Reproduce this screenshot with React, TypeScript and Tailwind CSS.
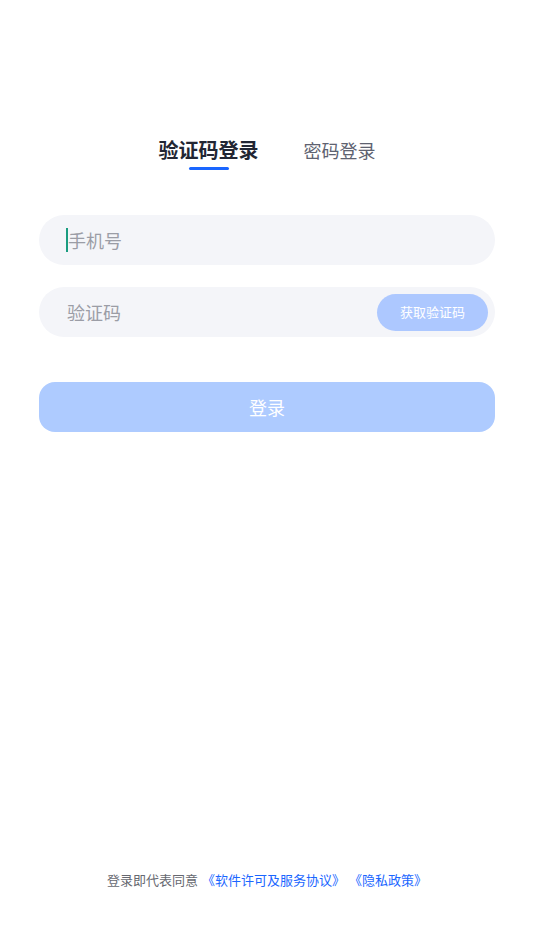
import React from "react";

export default function App() {
  return (
    <div
      className="min-h-[949px] w-full bg-white flex flex-col"
      style={{ fontFamily: '"Noto Sans CJK SC", "Noto Sans", sans-serif' }}
    >
      <div className="pt-[136px] flex justify-center gap-[45px]">
        <div className="flex flex-col items-center">
          <div className="text-[20px] leading-[28px] font-bold text-[#222633]">验证码登录</div>
          <div className="mt-[3px] h-[3px] w-[40px] rounded-full bg-[#1a66ff]" />
        </div>
        <div className="text-[18px] leading-[28px] text-[#5e6270]">密码登录</div>
      </div>

      <div className="mt-[45px] px-[39px] flex flex-col">
        <div className="h-[50px] rounded-full bg-[#f4f5f9] pl-[27px] flex items-center">
          <div className="w-[2px] h-[24px] bg-[#1a9c80]" />
          <span className="text-[18px] text-[#9b9da6]">手机号</span>
        </div>

        <div className="mt-[22px] h-[50px] rounded-full bg-[#f4f5f9] pl-[28px] pr-[7px] flex items-center justify-between">
          <span className="text-[18px] text-[#9b9da6]">验证码</span>
          <div className="h-[37px] w-[111px] rounded-full bg-[#adc8ff] flex items-center justify-center text-[13px] text-white">
            获取验证码
          </div>
        </div>

        <div className="mt-[45px] h-[50px] rounded-[16px] bg-[#aecbff] flex items-center justify-center text-[18px] text-white">
          登录
        </div>
      </div>

      <div className="flex-1" />

      <div className="pb-[59px] flex justify-center text-[13px] leading-[20px]">
        <span className="text-[#666870]">登录即代表同意</span>
        <span className="ml-[4px] text-[#1a66ff]">《软件许可及服务协议》</span>
        <span className="ml-[4px] text-[#1a66ff]">《隐私政策》</span>
      </div>
    </div>
  );
}
